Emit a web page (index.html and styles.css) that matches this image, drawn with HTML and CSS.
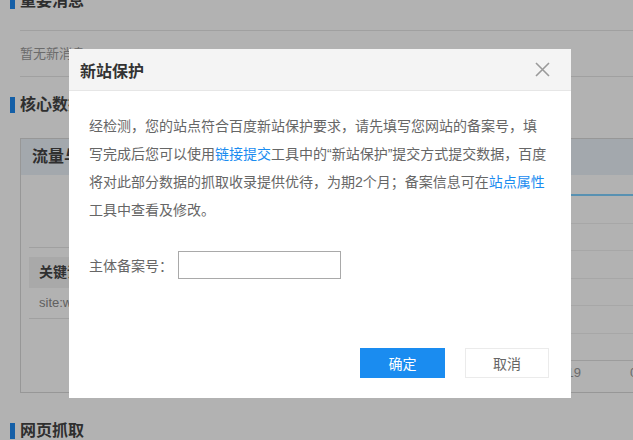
FILE: index.html
```html
<!DOCTYPE html>
<html lang="zh-CN">
<head>
<meta charset="utf-8">
<title>新站保护</title>
<link rel="stylesheet" href="styles.css">
</head>
<body>
<div class="page">
  <section class="sec sec-first">
    <h2 class="sec-title">重要消息</h2>
    <div class="msg">暂无新消息</div>
  </section>
  <section class="sec sec-core">
    <h2 class="sec-title">核心数据</h2>
    <div class="card">
      <div class="card-head">流量与关键词</div>
      <div class="card-body">
        <div class="kw">
          <div class="kw-rule"></div>
          <div class="kw-th">关键词</div>
          <div class="kw-td">site:www.example.com</div>
        </div>
        <div class="chart">
          <svg class="chart-svg" width="100%" height="217" shape-rendering="crispEdges">
            <line x1="0" x2="400" y1="20" y2="20" class="series"/>
            <line x1="0" x2="400" y1="48.5" y2="48.5" class="grid"/>
            <line x1="0" x2="400" y1="75.5" y2="75.5" class="grid"/>
            <line x1="0" x2="400" y1="103.5" y2="103.5" class="grid"/>
            <line x1="0" x2="400" y1="130.5" y2="130.5" class="grid"/>
            <line x1="0" x2="400" y1="158.5" y2="158.5" class="grid"/>
            <line x1="0" x2="400" y1="185.5" y2="185.5" class="axis"/>
            <text x="56" y="202" class="tick" text-anchor="end">02-17</text>
            <text x="138" y="202" class="tick" text-anchor="end">02-18</text>
            <text x="220" y="202" class="tick" text-anchor="end">02-19</text>
            <text x="269" y="202" class="tick">02-20</text>
          </svg>
        </div>
      </div>
    </div>
  </section>
  <section class="sec sec-crawl">
    <h2 class="sec-title">网页抓取</h2>
  </section>
</div>

<div class="mask"></div>

<div class="dialog">
  <div class="dlg-head">
    <span class="dlg-title">新站保护</span>
    <svg class="dlg-close" width="15" height="15" viewBox="0 0 15 15">
      <path d="M1 1 L14 14 M14 1 L1 14" stroke="#9a9a9a" stroke-width="1.6" fill="none"/>
    </svg>
  </div>
  <div class="dlg-body">
    <p class="dlg-text">经检测，您的站点符合百度新站保护要求，请先填写您网站的备案号，填写完成后您可以使用<a href="#">链接提交</a>工具中的“新站保护”提交方式提交数据，百度将对此部分数据的抓取收录提供优待，为期2个月；备案信息可在<a href="#">站点属性</a>工具中查看及修改。</p>
    <div class="dlg-field">
      <label class="dlg-label" for="icp">主体备案号：</label>
      <input class="dlg-input" id="icp" type="text">
    </div>
    <div class="dlg-foot">
      <button class="btn btn-primary" type="button">确定</button>
      <button class="btn btn-default" type="button">取消</button>
    </div>
  </div>
</div>
</body>
</html>
```

FILE: styles.css
```css
html, body {
  margin: 0;
  padding: 0;
}

body {
  overflow: hidden;
  background: #fff;
  font-family: "Liberation Sans", "Noto Sans CJK SC", sans-serif;
}

.page {
  width: 720px;
  padding-left: 10px;
  margin-top: -7px;
}

.sec-title {
  margin: 0;
  height: 16px;
  line-height: 16px;
  font-size: 16px;
  font-weight: bold;
  color: #444;
  border-left: 5px solid #1e88f0;
  padding-left: 5px;
}

.msg {
  margin: 21px 0 0 10px;
  height: 45px;
  line-height: 45px;
  border-top: 1px solid #e5e5e5;
  border-bottom: 1px solid #e5e5e5;
  font-size: 13px;
  color: #9a9a9a;
}

.sec-core {
  margin-top: 20px;
}

.card {
  margin: 25px 0 0 10px;
  border: 1px solid #d9d9d9;
}

.card-head {
  height: 36px;
  line-height: 36px;
  background: #eaf1f8;
  padding-left: 11px;
  font-size: 16px;
  font-weight: bold;
  color: #444;
}

.card-body {
  display: flex;
  height: 217px;
}

.kw {
  width: 330px;
  margin-left: 8px;
  padding-top: 72px;
}

.kw-rule {
  border-top: 1px solid #e5e5e5;
  margin-bottom: 9px;
}

.kw-th {
  height: 31px;
  line-height: 31px;
  background: #f2f2f2;
  padding-left: 10px;
  font-size: 14px;
  font-weight: bold;
  color: #444;
}

.kw-td {
  height: 30px;
  line-height: 30px;
  border-bottom: 1px solid #e5e5e5;
  padding-left: 10px;
  font-size: 13px;
  color: #8a8a8a;
}

.chart {
  flex: 1;
  margin-left: 2px;
}

.chart-svg {
  display: block;
}

.chart-svg .series {
  stroke: #7fd0ff;
  stroke-width: 2;
}

.chart-svg .grid {
  stroke: #efefef;
  stroke-width: 1;
}

.chart-svg .axis {
  stroke: #e0e0e0;
  stroke-width: 1;
}

.chart-svg .tick {
  font-family: "Liberation Sans", sans-serif;
  font-size: 13px;
  fill: #999;
}

.sec-crawl {
  margin-top: 30px;
}

.mask {
  position: fixed;
  left: 0;
  top: 0;
  right: 0;
  bottom: 0;
  background: rgba(0, 0, 0, 0.3);
}

.dialog {
  position: fixed;
  left: 69px;
  top: 49px;
  width: 502px;
  background: #fff;
}

.dlg-head {
  height: 41px;
  background: #f4f4f4;
  border-bottom: 1px solid #e6e6e6;
  display: flex;
  align-items: center;
  justify-content: space-between;
  padding: 0 21px 0 11px;
}

.dlg-title {
  font-size: 16px;
  font-weight: bold;
  color: #333;
}

.dlg-close {
  display: block;
}

.dlg-body {
  padding: 21px 22px 20px 20px;
}

.dlg-text {
  margin: 0;
  font-size: 14px;
  line-height: 28px;
  color: #666;
}

.dlg-text a {
  color: #1a8cf0;
  text-decoration: none;
}

.dlg-field {
  margin-top: 27px;
  display: flex;
  align-items: center;
  height: 28px;
  font-size: 14px;
  color: #666;
}

.dlg-input {
  margin: 0 0 0 5px;
  width: 163px;
  height: 28px;
  box-sizing: border-box;
  border: 1px solid #a9a9a9;
  padding: 0 6px;
  font-size: 14px;
  outline: none;
}

.dlg-foot {
  margin-top: 69px;
  display: flex;
  justify-content: flex-end;
  gap: 20px;
}

.btn {
  width: 85px;
  height: 30px;
  box-sizing: border-box;
  margin: 0;
  padding: 0;
  font-family: "Liberation Sans", "Noto Sans CJK SC", sans-serif;
  font-size: 14px;
  border: 1px solid transparent;
  cursor: pointer;
}

.btn-primary {
  background: #1a8cf0;
  border-color: #1a8cf0;
  color: #fff;
}

.btn-default {
  width: 84px;
  background: #fff;
  border-color: #ebebeb;
  color: #666;
}
```
